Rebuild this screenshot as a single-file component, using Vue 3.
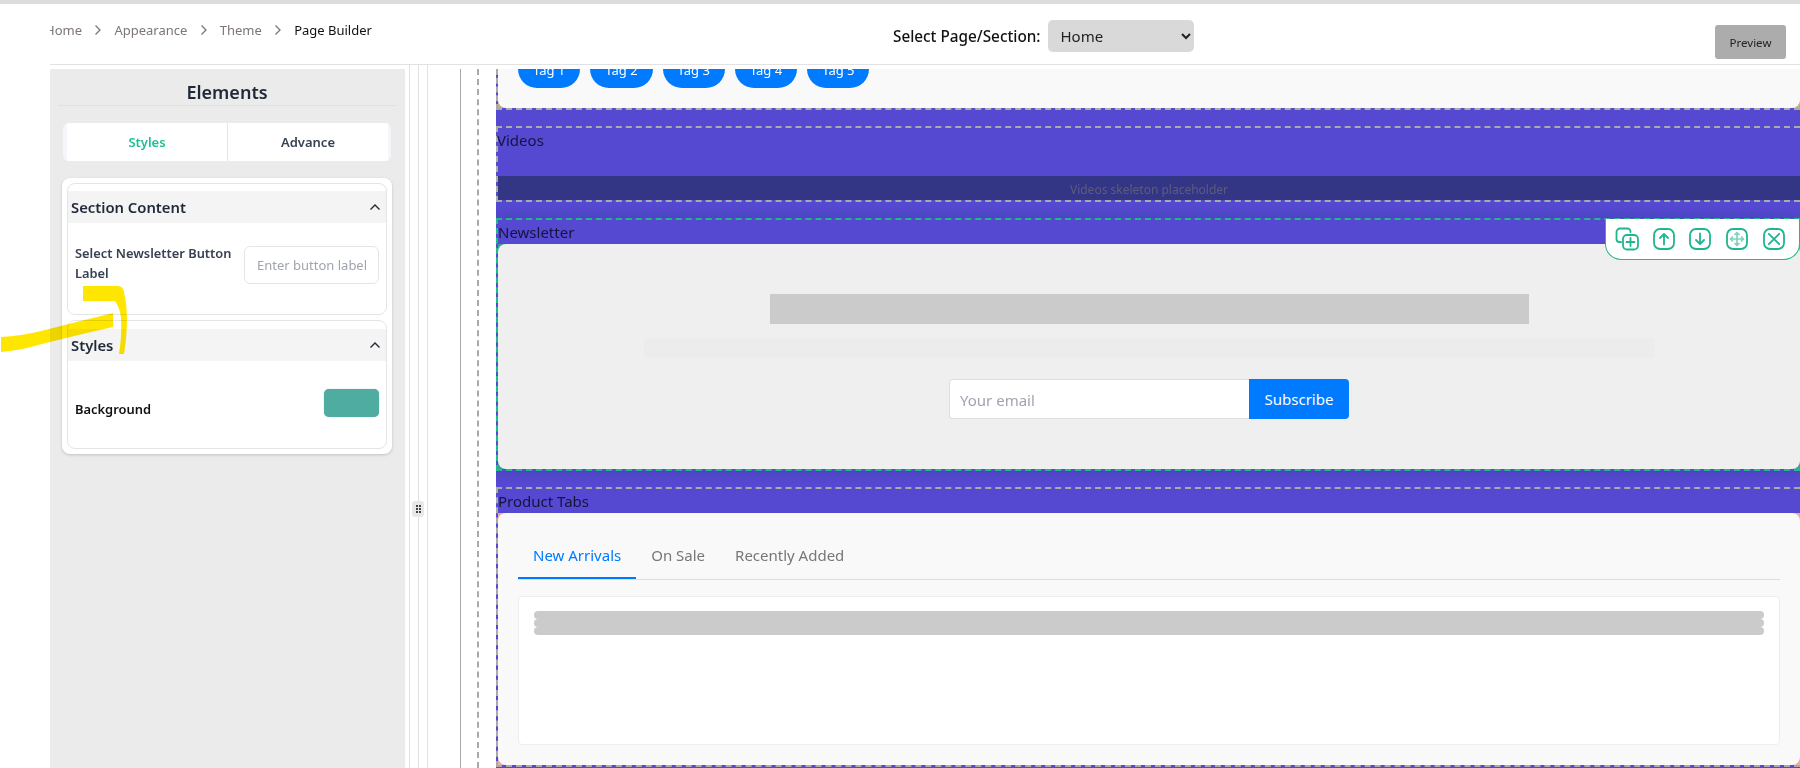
<template>
  <div class="app">
    <div class="strip"></div>
    <header class="header">
      <div class="crumbs">
        <nav class="crumbs-in">
          <template v-for="(c, i) in crumbs" :key="c">
            <span :class="{ current: i === crumbs.length - 1 }">{{ c }}</span>
            <svg v-if="i < crumbs.length - 1" class="sep" viewBox="0 0 8 12" width="8" height="12"><path d="M1.5 1.5 6 6l-4.500 4.500" /></svg>
          </template>
        </nav>
      </div>
      <div class="picker">
        <label for="pg">Select Page/Section:</label>
        <select id="pg"><option>Home</option><option>About</option></select>
      </div>
      <button class="preview">Preview</button>
    </header>

    <main class="body">
      <aside class="left">
        <div class="panel">
          <h2 class="title">Elements</h2>
          <div class="tabs">
            <button class="tab on">Styles</button>
            <button class="tab">Advance</button>
          </div>
          <div class="wrap">
            <section class="box box1">
              <div class="bhead"><span>Section Content</span><svg viewBox="0 0 12 8" width="12" height="8"><path d="M1.500 6.500 6 2l4.500 4.500" /></svg></div>
              <div class="row1">
                <label>Select Newsletter Button Label</label>
                <input placeholder="Enter button label" />
              </div>
            </section>
            <section class="box box2">
              <div class="bhead"><span>Styles</span><svg viewBox="0 0 12 8" width="12" height="8"><path d="M1.500 6.500 6 2l4.500 4.500" /></svg></div>
              <div class="row2">
                <label>Background</label>
                <div class="swatch"></div>
              </div>
            </section>
          </div>
        </div>
      </aside>

      <div class="split">
        <div class="half"></div>
        <div class="grip"><i></i><i></i><i></i><i></i><i></i><i></i></div>
      </div>

      <div class="right">
        <div class="rail"><div class="rail-in"></div></div>
        <div class="canvas">
          <section class="sec s1">
            <div class="under tan">
              <div class="card card-tags">
                <a v-for="n in 5" :key="n" class="tag">Tag {{ n }}</a>
              </div>
            </div>
          </section>

          <section class="sec s2">
            <div class="lab lab-v">Videos</div>
            <div class="skel-note">Videos skeleton placeholder</div>
          </section>

          <section class="sec s3">
            <div class="lab">Newsletter</div>
            <div class="under teal">
              <div class="card news">
                <div class="n-title"></div>
                <div class="n-sub"></div>
                <form class="n-form" @submit.prevent>
                  <input placeholder="Your email" />
                  <button>Subscribe</button>
                </form>
              </div>
            </div>
            <div class="tools">
              <svg viewBox="0 0 24 24" width="24" height="24"><path d="M15.500 5V4.500A3 3 0 0 0 12.500 1.500H5A3.500 3.500 0 0 0 1.500 5v7a3 3 0 0 0 3 3h1.500" /><rect x="8" y="8" width="15" height="14.500" rx="4" /><path d="M15.500 11v8M11.500 15h8" /></svg>
              <svg viewBox="0 0 24 24" width="24" height="24"><rect x="2" y="2" width="20" height="20" rx="6" /><path d="M12 17.500V7M8 11l4-4 4 4" /></svg>
              <svg viewBox="0 0 24 24" width="24" height="24"><rect x="2" y="2" width="20" height="20" rx="6" /><path d="M12 6.500V17M8 13l4 4 4-4" /></svg>
              <svg viewBox="0 0 24 24" width="24" height="24"><rect x="2" y="2" width="20" height="20" rx="6" /><path class="soft" d="M12 5.500v13M5.500 12h13M10 7.500l2-2 2 2M10 16.500l2 2 2-2M7.500 10l-2 2 2 2M16.500 10l2 2-2 2" /></svg>
              <svg viewBox="0 0 24 24" width="24" height="24"><rect x="2" y="2" width="20" height="20" rx="6" /><path d="M6.800 6.800l10.400 10.400M17.200 6.800 6.800 17.200" /></svg>
            </div>
          </section>

          <section class="sec s4">
            <div class="lab">Product Tabs</div>
            <div class="under pink">
              <div class="card prod">
                <div class="nav">
                  <a class="link active">New Arrivals</a>
                  <a class="link">On Sale</a>
                  <a class="link">Recently Added</a>
                </div>
                <div class="pane">
                  <div class="bar"></div>
                  <div class="bar"></div>
                  <div class="bar"></div>
                </div>
              </div>
            </div>
          </section>
        </div>
      </div>
    </main>

    <svg class="marker" viewBox="0 0 140 80" width="140" height="80">
      <path d="M83 6H118Q123 6 124 12Q127 25 127 38Q127 55 124 74H119Q122 55 121 38Q120 28 115 21H83Z" />
      <path d="M1 57q20-1 40-6 35-9 72-18v14q-40 9-75 18-15 5-37 7z" />
    </svg>
  </div>
</template>

<script setup>
const crumbs = ['Home', 'Appearance', 'Theme', 'Page Builder']
</script>

<style>
html, body { margin: 0; background: #fff; }
</style>

<style scoped>
.app {
  position: relative;
  width: 1800px;
  height: 768px;
  overflow: hidden;
  background: #fff;
  font-family: "Noto Sans", "Open Sans", sans-serif;
  display: flex;
  flex-direction: column;
}
.strip { height: 4px; background: #dcdcdc; flex: none; }
.header {
  flex: none;
  height: 61px;
  box-sizing: border-box;
  margin-left: 50px;
  border-bottom: 1px solid #e2e2e2;
  display: grid;
  grid-template-columns: 843px auto 1fr;
  align-items: start;
  padding-right: 14px;
}
.crumbs { overflow: hidden; margin-top: 16px; height: 20px; }
.crumbs-in {
  display: flex;
  align-items: center;
  gap: 12.200px;
  margin-left: -5px;
  font-size: 13px;
  line-height: 20px;
  color: #7d7673;
  white-space: nowrap;
}
.crumbs-in .current { color: #111; }
.sep { fill: none; stroke: #777; stroke-width: 1.300; }
.picker { display: flex; align-items: center; gap: 8px; margin-top: 16px; }
.picker label { font-size: 15.300px; font-weight: 500; color: #111; }
.picker select {
  width: 146px;
  height: 32px;
  border: 0;
  border-radius: 5px;
  background: #d9d9d9;
  color: #222;
  font: 15px "Noto Sans", sans-serif;
  padding-left: 8px;
}
.preview {
  justify-self: end;
  margin-top: 21px;
  width: 71px;
  height: 34px;
  border: 0;
  border-radius: 3px;
  background: #acacac;
  color: #222;
  font: 11.500px "Noto Sans", sans-serif;
  padding: 0;
}

.body { flex: 1; min-height: 0; display: flex; padding-left: 50px; }
.left {
  width: 360px;
  box-sizing: border-box;
  flex: none;
  border-right: 1px solid #e2e2e2;
  padding: 4px 4px 0 0;
}
.panel {
  height: 100%;
  background: #ebebeb;
  box-sizing: border-box;
  padding: 0 9px 0 8px;
}
.title {
  margin: 0;
  height: 37px;
  box-sizing: border-box;
  border-bottom: 1px solid #e0e0e0;
  text-align: center;
  font-size: 18px;
  font-weight: 600;
  padding-top: 12px;
  line-height: 22px;
  color: #1f2937;
}
.tabs {
  margin: 17px 5px 0;
  height: 38px;
  display: flex;
  border-radius: 6px;
  background: #f6f6fa;
  padding: 0 3px 0 4px;
  overflow: hidden;
}
.tab {
  flex: 1;
  border: 0;
  background: #fff;
  font: 600 13px "Noto Sans", sans-serif;
  color: #374151;
  padding: 0;
}
.tab + .tab { border-left: 1px solid #e5e5e5; }
.tab.on { color: #20bf96; }
.wrap {
  margin: 17px 4px 0 4px;
  background: #fff;
  border-radius: 8px;
  padding: 5px;
  box-shadow: 0 1px 3px rgba(0, 0, 0, .18);
  display: flex;
  flex-direction: column;
  gap: 5px;
}
.box {
  box-sizing: border-box;
  border: 1px solid #e5e5e5;
  border-radius: 8px;
  overflow: hidden;
}
.box1 { height: 132px; padding-top: 7px; }
.box2 { height: 129px; padding-top: 8px; }
.bhead {
  height: 32px;
  background: #f4f4f4;
  padding: 0 5px 0 3px;
  display: flex;
  align-items: center;
  justify-content: space-between;
  font-size: 14.800px;
  font-weight: 600;
  color: #1f2937;
}
.bhead svg { fill: none; stroke: #1f2937; stroke-width: 1.400; }
.row1 { display: flex; align-items: flex-start; justify-content: space-between; padding: 20px 7px 0; }
.row1 label {
  width: 160px;
  font-size: 12.850px;
  font-weight: 600;
  line-height: 20px;
  color: #374151;
}
.row1 input {
  box-sizing: border-box;
  width: 135px;
  height: 38px;
  margin-top: 3px;
  border: 1px solid #e5e5e5;
  border-radius: 6px;
  padding: 0 12px;
  font: 13px "Noto Sans", sans-serif;
  outline: 0;
}
.row1 input::placeholder { color: #a0a4ae; opacity: 1; }
.row2 { display: flex; justify-content: space-between; padding: 28px 7px 0; }
.row2 label {
  font-size: 12.900px;
  font-weight: 600;
  color: #111;
  margin-top: 11px;
}
.swatch {
  width: 55px;
  height: 28px;
  border-radius: 5px;
  background: #4faca0;
  box-shadow: 0 0 1px rgba(0, 0, 0, .4);
}

.split { position: relative; width: 17px; flex: none; }
.half { width: 9px; height: 100%; box-sizing: border-box; border-right: 1px solid #e2e2e2; }
.grip {
  position: absolute;
  left: 2px;
  top: 436px;
  width: 12px;
  height: 16px;
  border-radius: 3px;
  background: #e8e8e8;
  display: grid;
  grid-template-columns: 2px 2px;
  grid-auto-rows: 2px;
  gap: 1px;
  justify-content: center;
  align-content: center;
}
.grip i { background: #444; }

.right {
  flex: 1;
  min-width: 0;
  display: flex;
  border-left: 1px solid #e2e2e2;
  padding-top: 4px;
}
.rail { width: 68px; flex: none; box-sizing: border-box; padding-left: 32px; }
.rail-in {
  height: 100%;
  width: 19px;
  box-sizing: border-box;
  border-left: 1px solid #aaa;
  border-right: 2px dashed #aaa;
}
.canvas {
  flex: 1;
  min-width: 0;
  background: #5449d0;
  overflow: hidden;
  display: flex;
  flex-direction: column;
  gap: 16px;
}
.sec {
  position: relative;
  flex: none;
  border: 2px dashed #aaa;
  border-right: 0;
}
.s1 { border-top: 0; }
.s3 { border-color: #1fb98d; box-shadow: 0 0 12px rgba(0, 0, 0, .14); z-index: 1; background: #5449d0; }
.card { border-radius: 8px; }
.card-tags {
  height: 39px;
  background: #f9f9f9;
  box-sizing: border-box;
  padding-left: 20px;
  display: flex;
  gap: 10px;
  align-items: flex-end;
  overflow: hidden;
  border-radius: 0 0 8px 8px;
}
.tag {
  flex: none;
  box-sizing: border-box;
  height: 38px;
  margin-bottom: 20px;
  padding: 0 15px;
  border-radius: 19px;
  background: #007bff;
  color: #fff;
  font-size: 13px;
  line-height: 40px;
}
.lab {
  height: 24px;
  font-size: 15px;
  line-height: 24px;
  color: #17133f;
}
.lab-v { margin-left: -1px; }
.skel-note {
  margin-top: 24px;
  height: 24px;
  background: #333585;
  color: #5e5c7e;
  font-size: 12px;
  line-height: 27px;
  text-align: center;
}
.tan { background: #c9a97c; }
.teal { background: #3aa58f; }
.pink { background: #f0a8a8; }
.news {
  height: 225px;
  box-sizing: border-box;
  background: #efefef;
  padding-top: 50px;
  display: flex;
  flex-direction: column;
  align-items: center;
}
.n-title { width: 759px; height: 30px; background: #cbcbcb; }
.n-sub { width: 1011px; height: 20px; margin-top: 14px; background: #ececec; }
.n-form { display: flex; margin-top: 21px; width: 400px; height: 40px; }
.n-form input {
  flex: 1;
  min-width: 0;
  box-sizing: border-box;
  border: 1px solid #dedede;
  border-right: 0;
  border-radius: 4px 0 0 4px;
  padding: 1px 10px 0;
  background: #fff;
  font: 15px "Noto Sans", sans-serif;
  outline: 0;
}
.n-form input::placeholder { color: #a0a4ae; opacity: 1; }
.n-form button {
  width: 100px;
  border: 0;
  border-radius: 0 4px 4px 0;
  background: #007bff;
  color: #fff;
  font: 15px "Noto Sans", sans-serif;
  padding: 0;
}
.tools {
  position: absolute;
  right: 0;
  top: -1px;
  width: 195px;
  height: 41px;
  box-sizing: border-box;
  background: #fff;
  border: 1px solid #1fb98d;
  border-top: 0;
  border-radius: 0 0 16px 16px;
  display: flex;
  align-items: center;
  gap: 12.700px;
  padding-left: 9px;
}
.tools svg { flex: none; fill: none; stroke: #1fb58f; stroke-width: 1.800; stroke-linecap: round; stroke-linejoin: round; }
.tools .soft { stroke: #7fd3bd; stroke-width: 1.700; }
.prod {
  height: 252px;
  box-sizing: border-box;
  background: #f9f9f9;
  padding: 20px 20px 0;
}
.nav { display: flex; height: 47px; box-sizing: border-box; border-bottom: 1px solid #dedede; }
.link {
  padding: 0 15px;
  height: 46px;
  line-height: 45px;
  font-size: 15px;
  color: #777;
  box-sizing: border-box;
}
.link.active {
  color: #007bff;
  border-bottom: 2px solid #007bff;
  line-height: 45px;
}
.pane {
  margin-top: 16px;
  height: 149px;
  box-sizing: border-box;
  background: #fff;
  border: 1px solid #eee;
  border-radius: 4px;
  padding: 14px 15px;
}
.bar { height: 8px; border-radius: 4px; background: #cbcbcb; }
.marker {
  position: absolute;
  left: 0;
  top: 280px;
  mix-blend-mode: multiply;
  pointer-events: none;
}
.marker path { fill: #ffe600; }
</style>
